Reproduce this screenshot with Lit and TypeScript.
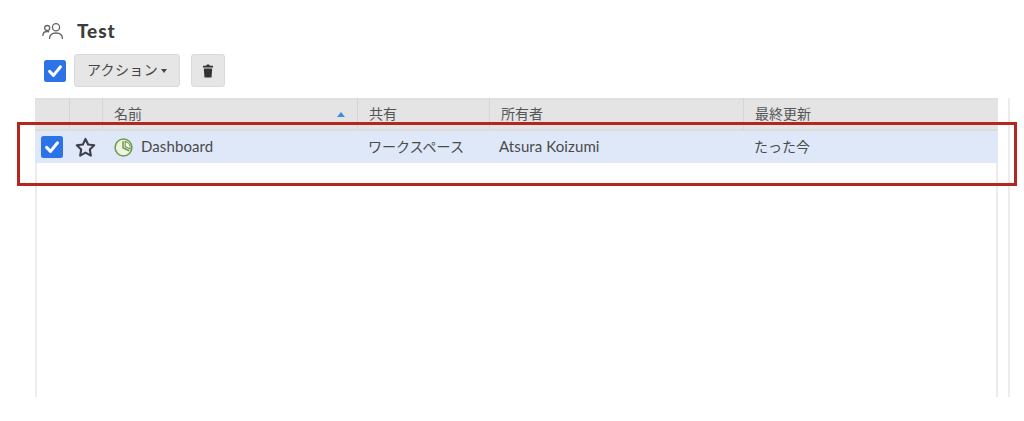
import { LitElement, html, css } from "lit";
import { customElement } from "lit/decorators.js";

const check = html`<svg viewBox="0 0 22 22" width="22" height="22"><rect width="22" height="22" rx="2.5" fill="#2b73e6"/><path d="M5.6 11.4l3.9 4 7-8.6" fill="none" stroke="#fff" stroke-width="3" stroke-linecap="round" stroke-linejoin="round"/></svg>`;

@customElement("app-root")
export class AppRoot extends LitElement {
  static styles = css`
    :host { display: block; width: 1024px; height: 421px; background: #fff; position: relative; overflow: hidden;
      font-family: "Lato", "Noto Sans CJK JP", sans-serif; color: #4a4a4a; }
    .title { display: flex; align-items: center; height: 22px; padding: 20px 0 0 42px; }
    .title svg { display: block; }
    .title b { margin-left: 13px; font: 900 19px/22px "Lato", sans-serif; color: #3d3d3d; letter-spacing: .9px; }
    .toolbar { display: flex; align-items: center; padding: 12px 0 0 44px; height: 33px; }
    .toolbar > svg { display: block; }
    .btn { box-sizing: border-box; height: 33px; background: #e6e6e6; border: 1px solid #dadada; border-radius: 3px;
      display: flex; align-items: center; justify-content: center; font-size: 14px; color: #444; }
    .act { width: 106px; margin-left: 8px; gap: 3px; padding: 0 0 3px 0; letter-spacing: .35px; }
    .caret { width: 0; height: 0; border: 3px solid transparent; border-top: 4px solid #444; border-bottom: 0; margin-top: 3px; }
    .del { width: 34px; margin-left: 11px; }
    .tablewrap { display: flex; height: 299px; margin: 11px 0 0 35px; }
    .table { width: 963px; box-sizing: border-box; height: 100%; border-left: 2px solid #ececec; border-right: 2px solid #ececec; margin-right: 10px; }
    .scroll { width: 2px; background: #ececec; }
    .row { display: grid; grid-template-columns: 35px 33px 255px 132px 254px 1fr; margin: 0 -2px; }
    .head { background: #e4e4e4; box-shadow: inset 0 2px 0 #e0e0e0; border-bottom: 2px solid #dcdcdc; height: 31px; }
    .head > div { border-right: 1px solid #d6d6d6; padding-left: 11px; font-size: 14px; line-height: 31px; color: #555; position: relative; }
    .head > div:last-child { border-right: 0; }
    .sort { position: absolute; right: 12px; top: 14px; width: 0; height: 0; border: 4.5px solid transparent; border-bottom: 5px solid #3b8ce8; border-top: 0; }
    .body { height: 32px; background: #dfe8f9; align-items: center; font-size: 14px; color: #4a4a4a; }
    .body > div { padding-left: 10px; display: flex; align-items: center; height: 32px; white-space: nowrap; }
    .body > .ck { padding-left: 6px; }
    .body > .st { padding-left: 5px; }
    .latin { font-size: 15px; letter-spacing: .1px; padding-bottom: 2px; }
    .jp { padding-bottom: 2px; }
    .body > div.jp, .body > div.latin { height: 30px; }
    .body > .name { gap: 8px; padding: 0 0 0 11px; height: 32px; }
    .name span { padding-bottom: 2px; }
    .body > .owner { padding-left: 9px; }
    .red { position: absolute; left: 17px; top: 122px; width: 1000px; height: 64px; box-sizing: border-box; border: 3px solid #b5261e; }
  `;
  render() {
    return html`
      <div class="title">
        <svg width="22" height="18" viewBox="0 0 22 18" fill="none" stroke="#666" stroke-width="1.3">
          <circle cx="14" cy="5.2" r="3.6"/><path d="M7.5 17c0-4 2.6-6 6.5-6s6.5 2 6.5 6"/>
          <circle cx="5.2" cy="6" r="2.5"/><path d="M.8 14c0-3 1.6-4.5 4.4-4.5 .8 0 1.4.1 2 .4"/>
        </svg>
        <b>Test</b>
      </div>
      <div class="toolbar">
        ${check}
        <div class="btn act">アクション<span class="caret"></span></div>
        <div class="btn del">
          <svg width="12" height="14" viewBox="0 0 12 14" fill="#333"><path d="M1 1.8h3.2L4.8.6h2.4l.6 1.2H11v1.6H1zM1.8 4.4h8.4l-.7 9.1H2.5z"/></svg>
        </div>
      </div>
      <div class="tablewrap">
        <div class="table">
          <div class="row head">
            <div></div><div></div>
            <div>名前<span class="sort"></span></div>
            <div>共有</div><div>所有者</div><div>最終更新</div>
          </div>
          <div class="row body">
            <div class="ck">${check}</div>
            <div class="st"><svg width="21" height="21" viewBox="0 0 20 20"><path d="M10 1.8l2.5 5.3 5.8.8-4.2 4 1 5.8-5.1-2.8-5.1 2.8 1-5.8-4.2-4 5.8-.8z" fill="none" stroke="#3f3f46" stroke-width="2" stroke-linejoin="round"/></svg></div>
            <div class="name"><svg width="19" height="19" viewBox="0 0 19 19" fill="none" stroke="#6b9b4a" stroke-width="1.5"><circle cx="9.5" cy="9.5" r="8.4" fill="#eef3e2"/><path d="M9 3.2v6.6l6.2 3"/><path d="M11.2 3.4v5.2l5 2.4a7 7 0 0 0-5-7.6z" fill="#fff" stroke-width="1.1"/></svg><span class="latin">Dashboard</span></div>
            <div class="jp">ワークスペース</div>
            <div class="owner latin">Atsura Koizumi</div>
            <div class="jp">たった今</div>
          </div>
        </div>
        <div class="scroll"></div>
      </div>
      <div class="red"></div>
    `;
  }
}
